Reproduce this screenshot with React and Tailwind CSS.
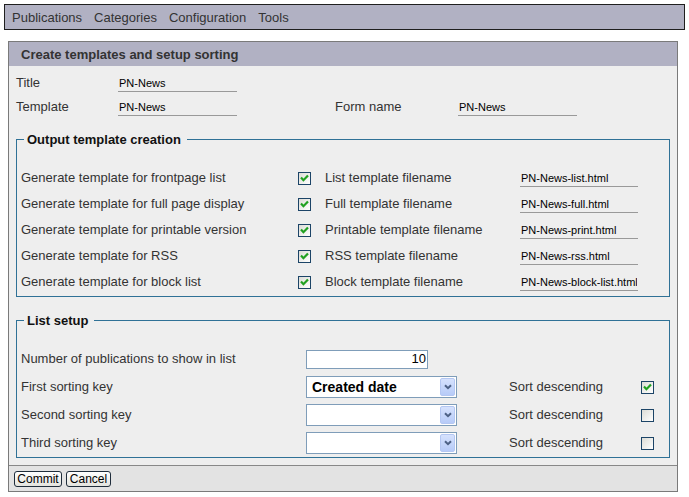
import React from 'react';

const menuItems = ['Publications', 'Categories', 'Configuration', 'Tools'];

const outputRows = [
  { label: 'Generate template for frontpage list', file: 'List template filename', value: 'PN-News-list.html' },
  { label: 'Generate template for full page display', file: 'Full template filename', value: 'PN-News-full.html' },
  { label: 'Generate template for printable version', file: 'Printable template filename', value: 'PN-News-print.html' },
  { label: 'Generate template for RSS', file: 'RSS template filename', value: 'PN-News-rss.html' },
  { label: 'Generate template for block list', file: 'Block template filename', value: 'PN-News-block-list.html' },
];

const sortRows = [
  { label: 'First sorting key', value: 'Created date', desc: true },
  { label: 'Second sorting key', value: '', desc: false },
  { label: 'Third sorting key', value: '', desc: false },
];

const CheckBox = ({ checked }) => (
  <div className="w-[13px] h-[13px] border border-[#1c4467] bg-linear-to-br from-[#dcdcd6] to-white flex items-center justify-center">
    {checked && (
      <svg width="9" height="8" viewBox="0 0 9 8">
        <path d="M1 3.6 L3.4 6.2 L8 1.4" fill="none" stroke="#21a121" strokeWidth="2.2" />
      </svg>
    )}
  </div>
);

const LineInput = ({ value, width = 'w-[119px]' }) => (
  <input
    readOnly
    value={value}
    className={`${width} h-[17px] bg-transparent border-b border-[#999] text-[11px] text-black px-[1px] outline-none`}
  />
);

const Select = ({ value }) => (
  <div className="w-[151px] h-[22px] border border-[#7f9db9] bg-white flex items-center justify-between pl-[5px] pr-px">
    <span className="text-[14px] font-bold text-black">{value}</span>
    <div className="w-[15px] h-[18px] rounded-[2px] border border-[#b4c7f2] bg-linear-to-b from-[#d6e2fd] to-[#b7cbf8] flex items-center justify-center">
      <svg width="8" height="6" viewBox="0 0 8 6">
        <path d="M1 1.2 L4 4.2 L7 1.2" fill="none" stroke="#4d6185" strokeWidth="2" />
      </svg>
    </div>
  </div>
);

const Legend = ({ children }) => (
  <legend className="ml-[3px] pl-[3px] pr-[6px] text-[13px] leading-[15px] font-bold text-[#111]">{children}</legend>
);

const Button = ({ children, width }) => (
  <button className={`${width} h-[16px] rounded-[3px] border border-[#1f2d3b] bg-linear-to-b from-white to-[#e4e4de] text-[12px] leading-[14px] text-black`}>
    {children}
  </button>
);

export default function App() {
  return (
    <div className="w-[689px] h-[497px] bg-white pt-[4px] px-[4px] font-['Liberation_Sans',Arial,sans-serif] text-[13px] text-[#333]">
      {/* Menu bar */}
      <div className="h-[26px] border border-[#1f1f1f] bg-[#b1b1c3] flex items-center gap-[12px] pl-[7px] pt-px text-[13px] text-[#333]">
        {menuItems.map((item) => (
          <span key={item}>{item}</span>
        ))}
      </div>

      {/* Panel */}
      <div className="mt-[11px] ml-[4px] w-[670px] border border-[#7a7a7a] bg-[#eeeeee]">
        <div className="h-[24px] bg-[#b1b1c3] flex items-center pl-[12px] pt-px text-[13px] font-bold text-[#333]">
          Create templates and setup sorting
        </div>

        <div className="px-[7px] pt-[5px] pb-[7px]">
          <div className="grid grid-cols-[102px_119px_98px_123px_119px] items-center">
            <div className="h-[24px] flex items-center">Title</div>
            <LineInput value="PN-News" />
            <div />
            <div />
            <div />
            <div className="h-[24px] flex items-center">Template</div>
            <LineInput value="PN-News" />
            <div />
            <div className="flex items-center">Form name</div>
            <LineInput value="PN-News" />
          </div>

          {/* Output template creation */}
          <fieldset className="mt-[13px] border border-[#2f7196] pl-[4px] pt-[18px] pb-px">
            <Legend>Output template creation</Legend>
            {outputRows.map((row) => (
              <div key={row.label} className="h-[26px] grid grid-cols-[277px_13px_14px_195px_118px] items-center">
                <span>{row.label}</span>
                <CheckBox checked />
                <div />
                <span>{row.file}</span>
                <LineInput value={row.value} width="w-[118px]" />
              </div>
            ))}
          </fieldset>

          {/* List setup */}
          <fieldset className="mt-[16px] border border-[#2f7196] pl-[4px] pt-[17px]">
            <Legend>List setup</Legend>
            <div className="h-[28px] grid grid-cols-[285px_122px] items-center">
              <span>Number of publications to show in list</span>
              <input
                readOnly
                value="10"
                className="w-[122px] h-[19px] border border-[#7f9db9] bg-white text-right text-[13px] text-black pr-px outline-none"
              />
            </div>
            {sortRows.map((row) => (
              <div key={row.label} className="h-[28px] grid grid-cols-[285px_151px_52px_132px_13px] items-center">
                <span>{row.label}</span>
                <Select value={row.value} />
                <div />
                <span>Sort descending</span>
                <CheckBox checked={row.desc} />
              </div>
            ))}
          </fieldset>
        </div>

        {/* Footer */}
        <div className="border-t border-[#888] bg-[#e3e3e3] pt-[5px] pb-[4px] pl-[5px] flex gap-[4px]">
          <Button width="w-[48px]">Commit</Button>
          <Button width="w-[45px]">Cancel</Button>
        </div>
      </div>
    </div>
  );
}
